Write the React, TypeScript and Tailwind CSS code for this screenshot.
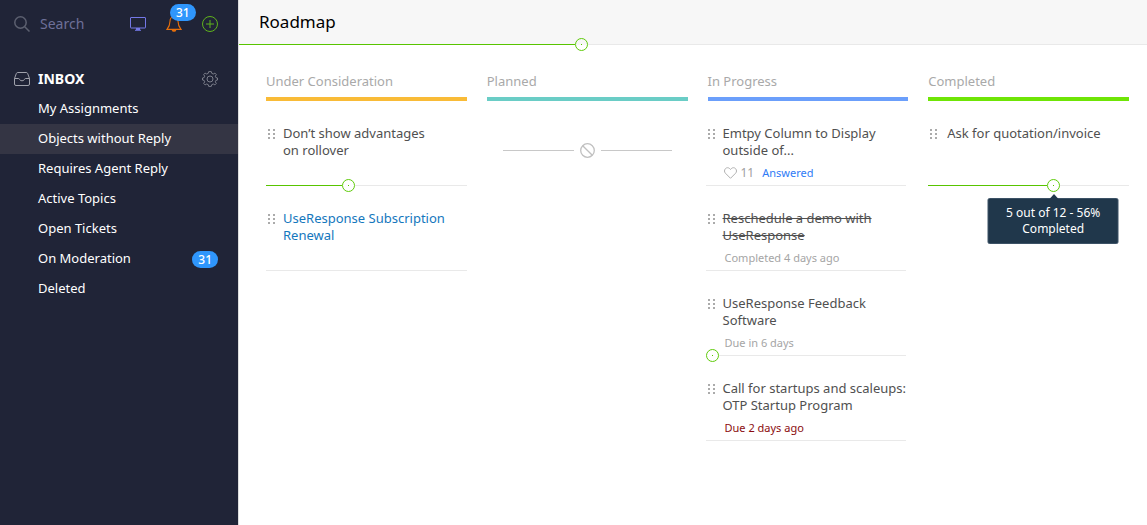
type Card = {
  title: string;
  link?: boolean;
  done?: boolean;
  likes?: number;
  status?: string;
  note?: string;
  overdue?: boolean;
  progress?: number;
  tooltip?: string[];
};

type Column = {
  name: string;
  bar: string;
  list: string;
  row: string;
  cards: Card[];
};

const navItems = [
  { label: "My Assignments" },
  { label: "Objects without Reply", active: true },
  { label: "Requires Agent Reply" },
  { label: "Active Topics" },
  { label: "Open Tickets" },
  { label: "On Moderation", count: 31 },
  { label: "Deleted" },
];

const columns: Column[] = [
  {
    name: "Under Consideration",
    bar: "bg-[#f9bb37]",
    list: "",
    row: "gap-2",
    cards: [
      { title: "Don’t show advantages\non rollover", progress: 38 },
      { title: "UseResponse Subscription\nRenewal", link: true },
    ],
  },
  { name: "Planned", bar: "bg-[#6acdc6]", list: "", row: "gap-2", cards: [] },
  {
    name: "In Progress",
    bar: "bg-[#6b9ffb]",
    list: "-ml-0.5 mr-0.5",
    row: "gap-2",
    cards: [
      { title: "Emtpy Column to Display\noutside of...", likes: 11, status: "Answered" },
      { title: "Reschedule a demo with\nUseResponse", done: true, note: "Completed 4 days ago" },
      { title: "UseResponse Feedback\nSoftware", note: "Due in 6 days", progress: 0 },
      { title: "Call for startups and scaleups:\nOTP Startup Program", note: "Due 2 days ago", overdue: true },
    ],
  },
  {
    name: "Completed",
    bar: "bg-[#6fe506]",
    list: "",
    row: "gap-2.5",
    cards: [
      { title: "Ask for quotation/invoice", progress: 59, tooltip: ["5 out of 12 - 56%", "Completed"] },
    ],
  },
];

const Progress = ({ value, tooltip }: { value: number; tooltip?: string[] }) => (
  <div
    role="progressbar"
    aria-label="Progress"
    aria-valuenow={value}
    className="flex h-px items-center"
  >
    <div className="h-px shrink-0 bg-[#58c400]" style={{ width: `${value}%` }} />
    <div className="relative flex size-[13px] shrink-0 items-center justify-center rounded-full border border-[#5fcb0b]">
      <span className="size-px bg-[#58c400]" />
      {tooltip && (
        <div
          role="tooltip"
          className="absolute top-full left-1/2 mt-[7px] w-[131px] -translate-x-1/2 rounded-xs border border-[#3c5266] bg-[#20374b] py-1.5 text-center text-xs leading-4 text-white"
        >
          <svg className="absolute -top-[5px] left-1/2 -ml-1" width="9" height="5" viewBox="0 0 9 5">
            <path d="M0 5L4.500 0L9 5Z" fill="#20374b" />
          </svg>
          {tooltip.map((line) => (
            <p key={line}>{line}</p>
          ))}
        </div>
      )}
    </div>
    <div className="h-px flex-1 bg-[#e9e9e9]" />
  </div>
);

const Grip = () => (
  <svg className="mt-1 ml-0.5 shrink-0" width="7" height="10" viewBox="0 0 7 10" fill="#ababab">
    {[0, 4, 8].map((y) => (
      <g key={y}>
        <rect x="0" y={y} width="2" height="2" />
        <rect x="5" y={y} width="2" height="2" />
      </g>
    ))}
  </svg>
);

const CardItem = ({ card, row }: { card: Card; row: string }) => (
  <li className="flex min-h-[85px] flex-col justify-between">
    <div className={`flex pt-6 ${row}`}>
      <Grip />
      <div>
        <a
          href="#"
          className={`block text-[13px] leading-[17px] whitespace-pre ${
            card.link ? "text-[#1477bd]" : "text-[#505050]"
          } ${card.done ? "line-through" : ""}`}
        >
          {card.title}
        </a>
        {card.note && (
          <p className={`mt-1.5 ml-0.5 text-[11px] leading-4 ${card.overdue ? "text-[#8b0c0f]" : "text-[#a5a5a5]"}`}>
            {card.note}
          </p>
        )}
        {card.status && (
          <div className="mt-1.5 ml-px flex items-center text-xs leading-4">
            <button className="flex items-center gap-1 text-[#a0a0a0]" aria-label="Like">
              <svg width="13" height="12" viewBox="0 0 13 12" fill="none" stroke="#b0b0b0">
                <path d="M6.500 11.300L1.400 6.200C0.200 5 0.200 3 1.400 1.700C2.600 0.400 4.500 0.400 5.700 1.600L6.500 2.500L7.300 1.600C8.500 0.400 10.400 0.400 11.600 1.700C12.800 3 12.800 5 11.600 6.200Z" />
              </svg>
              {card.likes}
            </button>
            <span className="ml-2 text-[11px] text-[#2f7bf6]">{card.status}</span>
          </div>
        )}
      </div>
    </div>
    {card.progress !== undefined ? (
      <Progress value={card.progress} tooltip={card.tooltip} />
    ) : (
      <div className="h-px bg-[#e9e9e9]" />
    )}
  </li>
);

const EmptyColumn = () => (
  <div className="mx-4 mt-[42px] flex items-center gap-1.5">
    <div className="h-px flex-1 bg-[#c8c8c8]" />
    <svg width="15" height="15" viewBox="0 0 15 15" fill="none" stroke="#c0c0c0">
      <circle cx="7.500" cy="7.500" r="6.800" strokeWidth="1.300" />
      <path d="M2.700 2.700L12.300 12.300" strokeWidth="1.300" />
    </svg>
    <div className="h-px flex-1 bg-[#c8c8c8]" />
  </div>
);

const Sidebar = () => (
  <aside className="w-[238px] shrink-0 bg-[#202437] text-white">
    <div className="flex h-12 items-center pr-5 pl-3.5">
      <svg width="16" height="16" viewBox="0 0 16 16" fill="none" stroke="#5c6070" strokeWidth="1.500">
        <circle cx="6.500" cy="6.500" r="5.700" />
        <path d="M10.700 10.700L15.500 15.500" />
      </svg>
      <input
        type="search"
        aria-label="Search"
        placeholder="Search"
        className="ml-2.5 w-[90px] bg-transparent text-sm text-white outline-none placeholder:text-[#6e7099]"
      />
      <div className="flex flex-1 items-center justify-between">
        <button aria-label="Screen">
          <svg width="16" height="14" viewBox="0 0 16 14" fill="none" stroke="#7478e8">
            <rect x="0.500" y="0.500" width="15" height="10.500" rx="0.500" />
            <path d="M6.500 11V13M9.500 11V13M5 13.300H11" />
            <rect x="6.500" y="11" width="3" height="2" fill="#7478e8" stroke="none" />
          </svg>
        </button>
        <button aria-label="Notifications" className="relative">
          <svg width="16" height="16" viewBox="0 0 16 16" fill="none" stroke="#e8700c" strokeWidth="1.100">
            <path d="M8 0.800C5.300 0.800 4 2.800 4 5.200C4 9 3.300 10.500 1 13.400H15C12.700 10.500 12 9 12 5.200C12 2.800 10.700 0.800 8 0.800Z" />
            <path d="M6.200 13.800C6.500 15.700 9.500 15.700 9.800 13.800Z" fill="#e8700c" />
          </svg>
          <span className="absolute -top-3 left-1 rounded-full bg-[#2f96fc] px-1.5 text-xs leading-[17px] font-medium">
            31
          </span>
        </button>
        <button aria-label="Add">
          <svg width="16" height="16" viewBox="0 0 16 16" fill="none" stroke="#5fb31c">
            <circle cx="8" cy="8" r="7.500" />
            <path d="M4 8H12M8 4V12" />
          </svg>
        </button>
      </div>
    </div>

    <div className="mt-4 flex h-[30px] items-center pr-5 pl-3.5">
      <svg width="16" height="14" viewBox="0 0 16 14" fill="none" stroke="#a0a2ac">
        <path d="M0.500 6.500L2.300 1.600Q2.700 0.500 3.800 0.500H12.200Q13.300 0.500 13.700 1.600L15.500 6.500V12Q15.500 13.500 14 13.500H2Q0.500 13.500 0.500 12Z" />
        <path d="M0.500 6.500H4.500Q5.200 6.500 5.500 7.300Q6 8.800 8 8.800Q10 8.800 10.500 7.300Q10.800 6.500 11.500 6.500H15.500" />
      </svg>
      <h2 className="ml-2 text-sm font-bold">INBOX</h2>
      <button aria-label="Inbox settings" className="ml-auto">
        <svg width="16" height="16" viewBox="0 0 16 16" fill="none" stroke="#7c7f8b">
          <path d="M6.700 0.600H9.300L9.800 2.400L11.300 3L12.900 2.100L14.300 3.600L13.300 5.200L13.900 6.600L15.500 7V9L13.900 9.400L13.300 10.800L14.300 12.400L12.900 13.900L11.300 13L9.800 13.600L9.300 15.400H6.700L6.200 13.600L4.700 13L3.100 13.900L1.700 12.400L2.700 10.800L2.100 9.400L0.500 9V7L2.100 6.600L2.700 5.200L1.700 3.600L3.100 2.100L4.700 3L6.200 2.400Z" strokeLinejoin="round" />
          <circle cx="8" cy="8" r="3" />
        </svg>
      </button>
    </div>

    <nav>
      {navItems.map((item) => (
        <a
          key={item.label}
          href="#"
          className={`flex h-[30px] items-center justify-between pr-5 pl-[38px] text-[13px] ${
            item.active ? "bg-[#343544]" : ""
          }`}
        >
          {item.label}
          {item.count && (
            <span className="rounded-full bg-[#2f96fc] px-1.5 text-xs leading-[17px] font-medium">
              {item.count}
            </span>
          )}
        </a>
      ))}
    </nav>
  </aside>
);

export default function App() {
  return (
    <div className="flex min-h-screen bg-white font-['Noto_Sans','Open_Sans',sans-serif]">
      <Sidebar />
      <main className="min-w-0 flex-1 border-l border-[#dddddd]">
        <header className="bg-[#f7f7f7]">
          <h1 className="flex h-11 items-center pl-5 text-[17px] text-black">Roadmap</h1>
          <Progress value={37} />
        </header>

        <div className="grid grid-cols-4 gap-5 pt-[26px] pr-[18px] pl-[27px]">
          {columns.map((column) => (
            <section key={column.name} className="min-w-0">
              <h2 className="h-[26px] text-[13px] leading-5 text-[#a9a9a9]">{column.name}</h2>
              <div className={`h-1 ${column.bar}`} />
              {column.cards.length > 0 ? (
                <ul className={column.list}>
                  {column.cards.map((card) => (
                    <CardItem key={card.title} card={card} row={column.row} />
                  ))}
                </ul>
              ) : (
                <EmptyColumn />
              )}
            </section>
          ))}
        </div>
      </main>
    </div>
  );
}
